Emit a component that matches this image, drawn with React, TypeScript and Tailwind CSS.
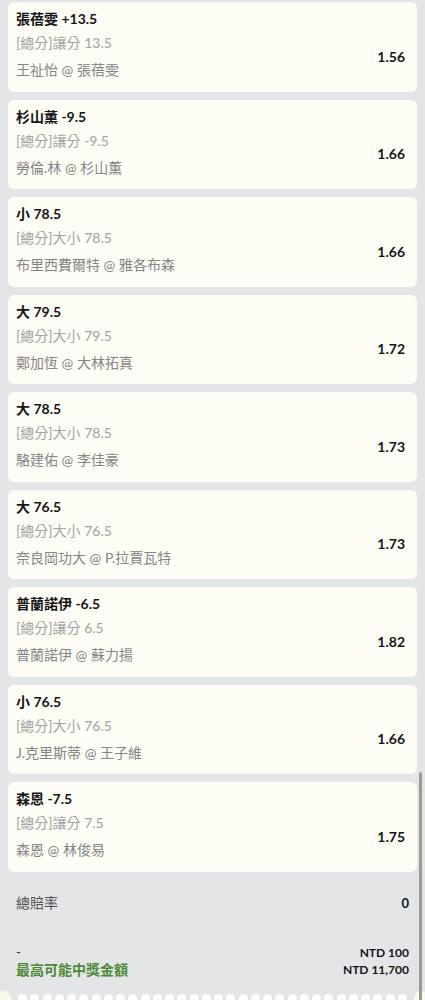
const bets = [
  { title: '張蓓雯 +13.5', market: '[總分]讓分 13.5', match: '王祉怡 @ 張蓓雯', odds: '1.56' },
  { title: '杉山薫 -9.5', market: '[總分]讓分 -9.5', match: '勞倫.林 @ 杉山薫', odds: '1.66' },
  { title: '小 78.5', market: '[總分]大小 78.5', match: '布里西費爾特 @ 雅各布森', odds: '1.66' },
  { title: '大 79.5', market: '[總分]大小 79.5', match: '鄭加恆 @ 大林拓真', odds: '1.72' },
  { title: '大 78.5', market: '[總分]大小 78.5', match: '駱建佑 @ 李佳豪', odds: '1.73' },
  { title: '大 76.5', market: '[總分]大小 76.5', match: '奈良岡功大 @ P.拉賈瓦特', odds: '1.73' },
  { title: '普蘭諾伊 -6.5', market: '[總分]讓分 6.5', match: '普蘭諾伊 @ 蘇力揚', odds: '1.82' },
  { title: '小 76.5', market: '[總分]大小 76.5', match: 'J.克里斯蒂 @ 王子維', odds: '1.66' },
  { title: '森恩 -7.5', market: '[總分]讓分 7.5', match: '森恩 @ 林俊易', odds: '1.75' },
];

function BetCard({ title, market, match, odds }: (typeof bets)[number]) {
  return (
    <div className="h-[89.5px] rounded-md bg-[#fdfdf5] pl-2 pr-3 pt-[7px]">
      <p className="text-[14px] font-bold leading-5 text-[#161616]">{title}</p>
      <div className="mt-1 flex items-center justify-between">
        <div>
          <p className="text-[14px] leading-5 text-[#a3a3a3]">{market}</p>
          <p className="mt-[7px] text-[14px] leading-5 text-[#858585]">{match}</p>
        </div>
        <p className="text-[14px] font-bold leading-5 text-[#161616]">{odds}</p>
      </div>
    </div>
  );
}

export default function App() {
  return (
    <div
      className="relative h-[1000px] overflow-hidden bg-[#e3e5e7]"
      style={{ fontFamily: "Lato, 'Noto Sans CJK TC', sans-serif" }}
    >
      <div className="flex flex-col gap-2 px-2 pt-[2px]">
        {bets.map((b) => (
          <BetCard key={b.title + b.match} {...b} />
        ))}
      </div>

      <div className="mt-[21px] flex items-center justify-between px-4">
        <span className="text-[14px] leading-5 text-[#555]">總賠率</span>
        <span className="text-[13px] font-bold leading-5 text-[#161616]">0</span>
      </div>

      <div className="mt-[31px] flex items-end justify-between px-4">
        <div className="flex flex-col">
          <span className="text-[13px] leading-[17px] text-[#333]">-</span>
          <span className="text-[14px] font-bold leading-[17px] text-[#4d8a35]">最高可能中獎金額</span>
        </div>
        <div className="flex flex-col items-end">
          <span className="text-[12px] font-bold leading-[17px] text-[#161616]">NTD 100</span>
          <span className="text-[12px] font-bold leading-[17px] text-[#161616]">NTD 11,700</span>
        </div>
      </div>

      <div className="mt-[13px] flex items-start">
        <div className="h-[14px] w-[14px] shrink-0 -translate-x-[3px] rounded-full bg-[#fbf9ec]" />
        <div className="flex flex-1 justify-between px-[4px] pt-[3px]">
          {Array.from({ length: 32 }).map((_, i) => (
            <div key={i} className="h-[9px] w-[9px] rounded-full bg-white" />
          ))}
        </div>
        <div className="h-[14px] w-[14px] shrink-0 translate-x-[3px] rounded-full bg-[#fbf9ec]" />
      </div>

      <div className="absolute right-[3px] top-[772px] h-[240px] w-[3px] rounded-full bg-[#9a9a9a]" />
    </div>
  );
}
